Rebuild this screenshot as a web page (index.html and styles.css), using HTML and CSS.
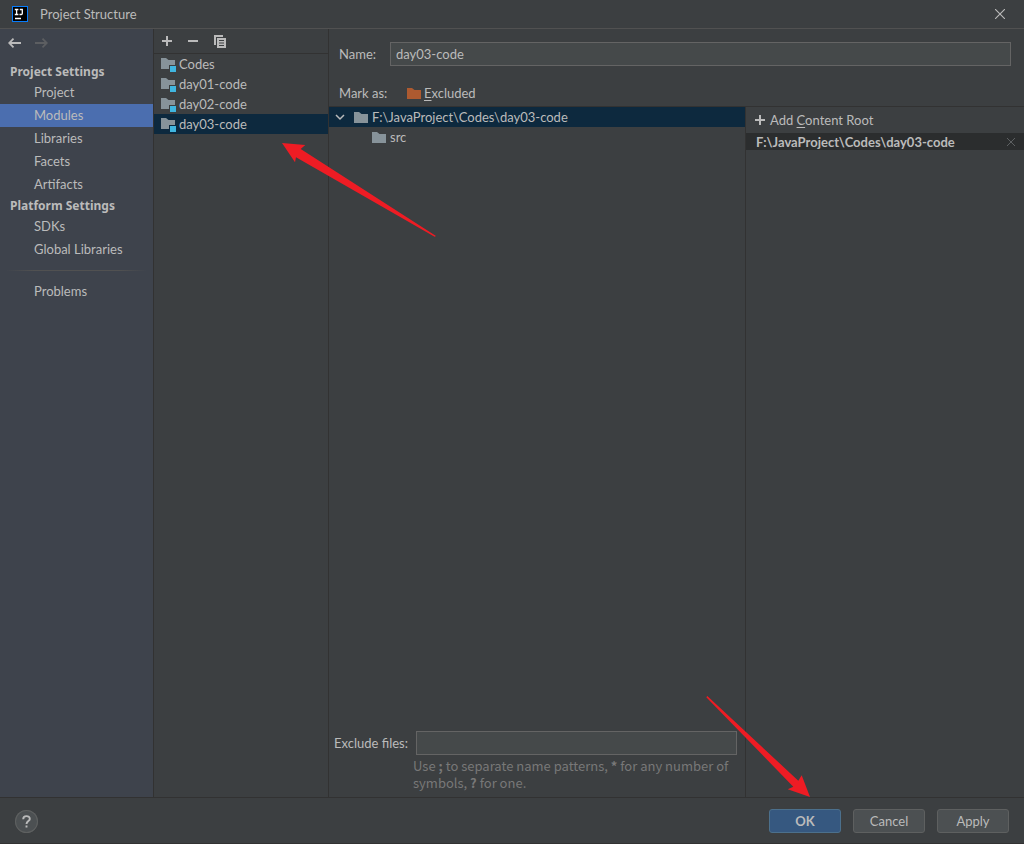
FILE: index.html
```html
<!DOCTYPE html>
<html lang="en">
<head>
<meta charset="utf-8">
<title>Project Structure</title>
<link rel="stylesheet" href="styles.css">
</head>
<body>
<svg class="defs" width="0" height="0" aria-hidden="true">
  <symbol id="folder" viewBox="0 0 14 11"><path d="M0 0h5l2.5 2H14v9H0z"/></symbol>
  <symbol id="module" viewBox="0 0 15 14"><path class="module-folder" d="M0 0h5l2.500 2H14v5H8v4H0z"/><path class="module-badge" d="M9 8h6v6H9z"/></symbol>
  <symbol id="plus" viewBox="0 0 10 10"><path d="M4 0h2v4h4v2H6v4H4V6H0V4h4z"/></symbol>
</svg>
<div class="dialog">
  <header class="titlebar">
    <svg class="logo" width="16" height="16" viewBox="0 0 16 16" aria-hidden="true">
      <path fill="#087cfa" d="M0 0h16v16H0z"/><path fill="#000" d="M1 1h14v14H1z"/>
      <path fill="none" stroke="#fff" stroke-width="1.300" d="M2.800 3.500h3.600M4.600 3.500v5M2.800 8.500h3.600M7.800 3.500h2.500v4q0 1-1 1H7.500M3 12.500h6"/>
    </svg>
    <h1 class="title">Project Structure</h1>
    <button class="icon-button" aria-label="Close"><svg width="10" height="10" viewBox="0 0 10 10"><path fill="none" stroke="#bbb" stroke-width="1.100" d="M0 0l10 10M10 0L0 10"/></svg></button>
  </header>

  <div class="content">
    <nav class="sidebar">
      <div class="history">
        <button class="icon-button" aria-label="Back"><svg width="13" height="10" viewBox="0 0 13 10"><path fill="none" stroke="#bbb" stroke-width="1.800" d="M13 5H1.500M5.500 .7L1.200 5l4.300 4.300"/></svg></button>
        <button class="icon-button" aria-label="Forward" disabled><svg width="13" height="10" viewBox="0 0 13 10"><path fill="none" stroke="#5c5e61" stroke-width="1.800" d="M0 5h11.500M7.500 .7L11.800 5 7.500 9.300"/></svg></button>
      </div>
      <h2 class="group">Project Settings</h2>
      <a class="nav-item" href="#">Project</a>
      <a class="nav-item selected" href="#" aria-current="page">Modules</a>
      <a class="nav-item" href="#">Libraries</a>
      <a class="nav-item" href="#">Facets</a>
      <a class="nav-item" href="#">Artifacts</a>
      <h2 class="group">Platform Settings</h2>
      <a class="nav-item" href="#">SDKs</a>
      <a class="nav-item" href="#">Global Libraries</a>
      <hr class="separator">
      <a class="nav-item" href="#">Problems</a>
    </nav>

    <section class="modules">
      <div class="toolbar">
        <button class="icon-button" aria-label="Add"><svg class="light" width="10" height="10"><use href="#plus"/></svg></button>
        <button class="icon-button" aria-label="Remove"><svg class="light" width="10" height="10" viewBox="0 0 10 10"><path d="M0 4h10v2H0z"/></svg></button>
        <button class="icon-button" aria-label="Copy"><svg class="light" width="12" height="13" viewBox="0 0 12 13"><path d="M0 0h9v2H2v8H0z"/><path fill-rule="evenodd" d="M3 3h9v10H3zM5 5v1h5V5zM5 7.500v1h5v-1zM5 10v1h5v-1z"/></svg></button>
      </div>
      <button class="row"><svg width="15" height="14"><use href="#module"/></svg>Codes</button>
      <button class="row"><svg width="15" height="14"><use href="#module"/></svg>day01-code</button>
      <button class="row"><svg width="15" height="14"><use href="#module"/></svg>day02-code</button>
      <button class="row active"><svg width="15" height="14"><use href="#module"/></svg>day03-code</button>
    </section>

    <main class="editor">
      <div class="form">
        <div class="name-line">
          <label class="form-label" for="name">Name:</label>
          <input class="field" id="name" type="text" value="day03-code">
        </div>
        <div class="mark-line">
          <span class="form-label">Mark as:</span>
          <button class="mark"><svg class="excluded" width="14" height="11"><use href="#folder"/></svg><span><u>E</u>xcluded</span></button>
        </div>
      </div>
      <div class="panes">
        <section class="sources">
          <button class="row tree-root active"><svg width="10" height="7" viewBox="0 0 10 7"><path fill="none" stroke="#bbb" stroke-width="1.500" d="M1 1l4 4 4-4"/></svg><svg class="folder" width="14" height="11"><use href="#folder"/></svg>F:\JavaProject\Codes\day03-code</button>
          <button class="row tree-child"><svg class="folder" width="14" height="11"><use href="#folder"/></svg>src</button>
          <div class="exclude">
            <label class="exclude-label" for="exclude">Exclude files:</label>
            <input class="field" id="exclude" type="text">
          </div>
          <p class="hint">Use <b>;</b> to separate name patterns, <b>*</b> for any number of symbols, <b>?</b> for one.</p>
        </section>
        <section class="roots">
          <button class="add-root"><svg class="light" width="10" height="10"><use href="#plus"/></svg><span>Add <u>C</u>ontent Root</span></button>
          <div class="root-row">
            <span>F:\JavaProject\Codes\day03-code</span>
            <button class="icon-button" aria-label="Remove content root"><svg width="8" height="8" viewBox="0 0 8 8"><path fill="none" stroke="#5d6062" d="M0 0l8 8M8 0L0 8"/></svg></button>
          </div>
        </section>
      </div>
    </main>
  </div>

  <footer class="footer">
    <button class="help" aria-label="Help"><svg width="23" height="23" viewBox="0 0 23 23"><path fill="none" stroke="#bbb" stroke-width="1.900" d="M8.200 9.200C8.200 5.200 14.800 5.200 14.800 8.900C14.800 11 11.500 11.200 11.500 14M11.500 15.400v2"/></svg></button>
    <button class="button primary">OK</button>
    <button class="button">Cancel</button>
    <button class="button">Apply</button>
  </footer>

  <svg class="pointer to-module" width="156" height="96" viewBox="282 142 156 96" aria-hidden="true"><path d="M282 143l23.300 2-4.600 4L436 236l-1.400.7L296 157.300l-1 5z"/></svg>
  <svg class="pointer to-ok" width="106" height="102" viewBox="706 696 106 102" aria-hidden="true"><path d="M810 797l-8.300-21.700-3.400 5.400L707.300 696l-1 1.300 87 89.400-5.600 2.600z"/></svg>
</div>
</body>
</html>
```
FILE: styles.css
```css
* { box-sizing: border-box; }

body {
  margin: 0;
  background: #3c3f41;
  color: #bbbbbb;
  font: 13px/20px Lato, "Noto Sans", sans-serif;
}

button, input { font: inherit; color: inherit; }

button {
  display: flex;
  align-items: center;
  padding: 0;
  border: 0;
  background: none;
  text-align: left;
}

svg { display: block; flex: none; }
u { text-underline-offset: 2px; }

.defs { position: absolute; }
.light { fill: #bbbbbb; }
.folder { fill: #87939a; }
.excluded { fill: #ad5a30; }
.module-folder { fill: #87939a; }
.module-badge { fill: #40b6e0; }

.dialog {
  position: relative;
  display: flex;
  flex-direction: column;
  min-height: 100vh;
}

.titlebar {
  display: flex;
  align-items: center;
  height: 29px;
  padding: 0 19px 0 12px;
  border-bottom: 1px solid #515151;
}

.title {
  flex: 1;
  margin: 0 0 0 12px;
  font-size: 13px;
  font-weight: 400;
}

.content {
  flex: 1;
  display: grid;
  grid-template-columns: 154px 175px 1fr;
}

.sidebar {
  background: #3e434c;
  border-right: 1px solid #323232;
}

.history {
  display: flex;
  gap: 14px;
  height: 33px;
  padding: 0 8px 5px;
}

.group {
  margin: 0;
  padding-left: 10px;
  font-family: "Noto Sans", sans-serif;
  font-size: 12px;
  line-height: 19px;
  font-weight: 700;
}

.nav-item {
  display: block;
  padding-left: 34px;
  line-height: 23px;
  color: inherit;
  text-decoration: none;
}

.nav-item.selected { background: #4b6eaf; }

.separator {
  height: 1px;
  margin: 9px 6px;
  border: 0;
  background: linear-gradient(90deg, transparent, #515151 20%, #515151 80%, transparent);
}

.modules { border-right: 1px solid #323232; }

.toolbar {
  display: flex;
  gap: 16px;
  height: 25px;
  padding-left: 8px;
  border-bottom: 1px solid #323232;
}

.row {
  gap: 3px;
  width: 100%;
  height: 20px;
  padding-left: 7px;
}

.modules .row svg { margin-top: 2px; }
.row.active { background: #0d293e; }

.editor {
  display: flex;
  flex-direction: column;
}

.form {
  height: 78px;
  padding: 13px 13px 0 10px;
  border-bottom: 1px solid #323232;
}

.name-line, .mark-line { display: flex; align-items: center; }
.mark-line { padding-top: 17px; }
.form-label { width: 51px; white-space: nowrap; }
.mark { gap: 3px; margin-left: 17px; }

.field {
  flex: 1;
  min-width: 0;
  height: 24px;
  padding: 0 5px;
  border: 1px solid #646464;
  background: #45494a;
  outline: 0;
}

.panes {
  flex: 1;
  display: grid;
  grid-template-columns: 3fr 2fr;
}

.sources {
  display: flex;
  flex-direction: column;
  border-right: 1px solid #323232;
}

.tree-root { gap: 4px; padding-left: 6px; }
.tree-root .folder { margin-left: 5px; }
.tree-child { gap: 4px; padding-left: 43px; }

.exclude {
  display: flex;
  align-items: center;
  margin-top: auto;
  padding: 0 8px 0 5px;
}

.exclude-label { width: 82px; }

.hint {
  margin: 2px 8px 6px 84px;
  font-family: "Noto Sans CJK SC", sans-serif;
  line-height: 17px;
  color: #787878;
}

.add-root {
  gap: 5px;
  height: 26px;
  padding-left: 9px;
}

.root-row {
  display: flex;
  align-items: center;
  justify-content: space-between;
  height: 17px;
  padding: 0 9px 0 10px;
  background: #2b2d2e;
  font-weight: 700;
}

.footer {
  display: flex;
  align-items: center;
  gap: 12px;
  height: 47px;
  padding: 1px 15px 0;
  border-top: 1px solid #323232;
  border-bottom: 1px solid #323232;
}

.help {
  margin-right: auto;
  border-radius: 50%;
  background: #4c5052;
  box-shadow: inset 0 0 0 1px #5e6060;
}

.button {
  justify-content: center;
  width: 72px;
  height: 24px;
  border: 1px solid #5e6060;
  border-radius: 3px;
  background: #4c5052;
}

.button.primary {
  border-color: #4c708c;
  background: #365880;
  font-weight: 700;
}

.pointer {
  position: absolute;
  fill: #ee1c24;
  pointer-events: none;
}

.to-module { left: 282px; top: 142px; }
.to-ok { right: 212px; bottom: 46px; }
```
